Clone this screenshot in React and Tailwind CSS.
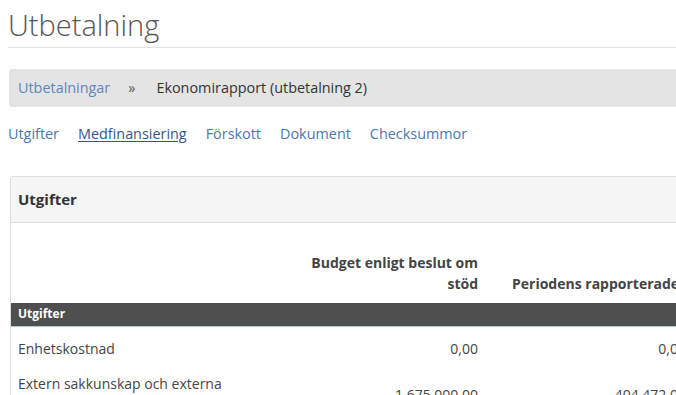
import React from 'react';

const tabs = ['Utgifter', 'Medfinansiering', 'Förskott', 'Dokument', 'Checksummor'];

const rows = [
    { label: 'Enhetskostnad', budget: '0,00', period: '0,00' },
    { label: 'Extern sakkunskap och externa tjänster', budget: '1 675 000,00', period: '404 472,00' },
];

const App = () => {
    return (
        <div className="h-[395px] w-[676px] overflow-hidden bg-white font-['Open_Sans',sans-serif] text-[#333]">
            <div className="w-[820px] pl-2">
                <h1 className="pt-[7px] text-[29px] font-light leading-[36px] text-[#555]">Utbetalning</h1>
                <div className="mt-[4px] border-b border-[#e2e2e2]"></div>

                <div className="mt-[21px] ml-px flex h-[38px] items-center rounded-[3px] bg-[#e4e4e4] px-[9px] text-[14.4px]">
                    <a className="text-[#5b87bd]">Utbetalningar</a>
                    <span className="pl-[18px] pr-[21px] text-[#555]">»</span>
                    <span className="text-[#333]">Ekonomirapport (utbetalning 2)</span>
                </div>

                <div className="mt-[16px] flex gap-[19px] text-[14.4px] leading-[22px]">
                    {tabs.map((t) => (
                        <a
                            key={t}
                            className={t === 'Medfinansiering' ? 'text-[#35568a] underline underline-offset-2' : 'text-[#4b78b0]'}
                        >
                            {t}
                        </a>
                    ))}
                </div>

                <div className="mt-[31px] ml-[2px] rounded-[3px] border border-[#dcdcdc]">
                    <div className="flex h-[46px] items-center border-b border-[#dcdcdc] bg-[#f5f5f5] px-[7px] text-[15px] font-bold text-[#333]">
                        Utgifter
                    </div>
                    <table className="w-full table-fixed border-collapse text-[14px]">
                        <thead>
                            <tr className="h-[80px]">
                                <th className="w-[270px]"></th>
                                <th className="w-[214px] pl-2 pr-[17px] pb-[9px] text-right align-bottom font-bold leading-[21px] text-[#444]">
                                    Budget enligt beslut om stöd
                                </th>
                                <th className="px-[17px] pb-[9px] text-left align-bottom font-bold leading-[21px] text-[#444] whitespace-nowrap">
                                    Periodens rapporterade
                                </th>
                            </tr>
                        </thead>
                        <tbody>
                            <tr className="h-[23px] border-b border-[#a9cde0] bg-[#4f4f4f]">
                                <td colSpan={3} className="px-[7px] text-[12px] font-bold text-white">Utgifter</td>
                            </tr>
                            {rows.map((r) => (
                                <tr key={r.label} className="leading-[22px] text-[#444]">
                                    <td className="px-[7px] pt-[11px] pb-[2px] align-top">
                                        <div className="w-[225px]">{r.label}</div>
                                    </td>
                                    <td className="pl-2 pr-[17px] pt-[11px] pb-[2px] align-middle text-right">{r.budget}</td>
                                    <td className="pr-[133px] pt-[11px] pb-[2px] align-middle text-right">{r.period}</td>
                                </tr>
                            ))}
                        </tbody>
                    </table>
                </div>
            </div>
        </div>
    );
};

export default App;
